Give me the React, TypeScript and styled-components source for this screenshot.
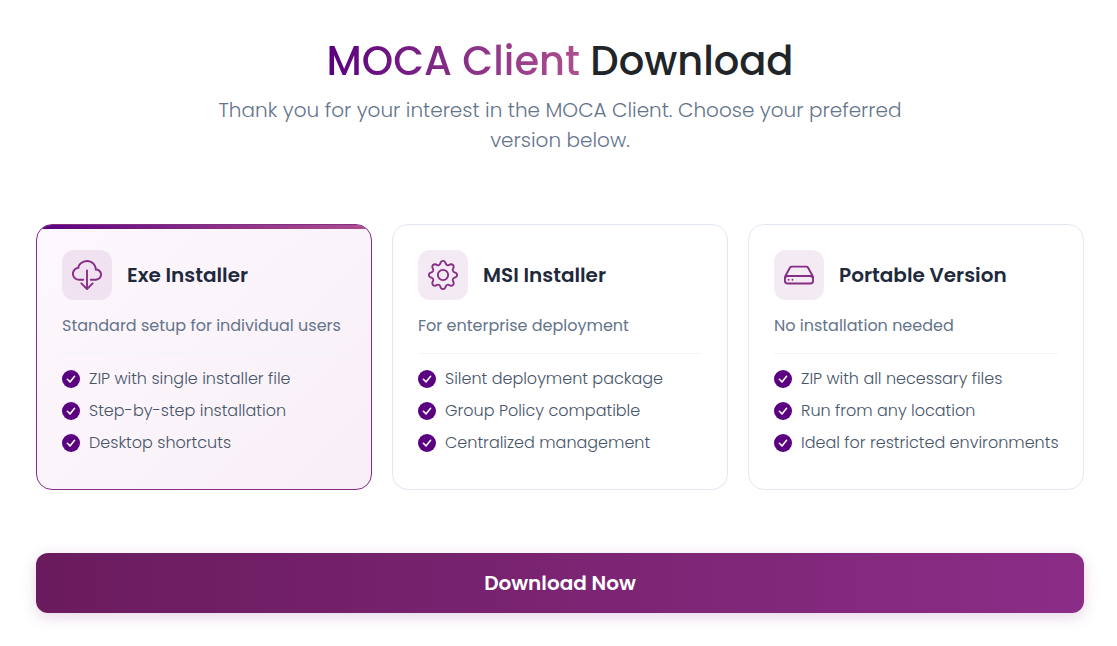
import React from 'react';
import styled, { createGlobalStyle, css } from 'styled-components';
import { BsCloudDownload, BsGear, BsHdd } from 'react-icons/bs';

const GlobalStyle = createGlobalStyle`
  *, *::before, *::after { box-sizing: border-box; }
  body {
    margin: 0;
    background: #fff;
    color: #212529;
    font-family: Poppins, Inter, sans-serif;
    font-size: 16px;
    line-height: 24px;
  }
`;

const Page = styled.main`
  display: flex;
  flex-direction: column;
  padding: 37px 33px 33px 36px;
`;

const Header = styled.header`
  display: flex;
  flex-direction: column;
  align-items: center;
  gap: 10px;
  text-align: center;
  margin-bottom: 69px;
`;

const Title = styled.h1`
  margin: 0;
  font-size: 40px;
  font-weight: 500;
  line-height: 48px;
`;

const Brand = styled.span`
  background: linear-gradient(90deg, #5a0080, #862d86 50%, #ae4f8f);
  background-clip: text;
  -webkit-background-clip: text;
  color: transparent;
`;

const Lead = styled.p`
  margin: 0;
  max-width: 700px;
  color: #64748b;
  font-size: 20px;
  font-weight: 300;
  line-height: 30px;
`;

const Cards = styled.section`
  display: grid;
  grid-template-columns: repeat(3, minmax(0, 1fr));
  gap: 20px;
  margin-bottom: 63px;
`;

const Card = styled.article<{ $selected?: boolean }>`
  position: relative;
  overflow: hidden;
  padding: 25px 25px 34px;
  border: 1px solid #e2e8f0;
  border-radius: 16px;
  background: #fff;
  ${({ $selected }) =>
    $selected &&
    css`
      border-color: #862d86;
      background: linear-gradient(135deg, #fdf8fe, #f8eff6);
      &::before {
        content: '';
        position: absolute;
        inset: 0 0 auto;
        height: 4px;
        background: linear-gradient(90deg, #5a0080, #862d86 50%, #ae4f8f);
      }
    `}
`;

const CardHead = styled.div`
  display: flex;
  align-items: center;
  gap: 15px;
  margin-bottom: 14px;
`;

const IconTile = styled.span`
  display: flex;
  align-items: center;
  justify-content: center;
  flex: none;
  width: 50px;
  height: 50px;
  border-radius: 12px;
  background: rgba(134, 45, 134, 0.1);
  color: #862d86;
  font-size: 30px;
`;

const CardTitle = styled.h2`
  margin: 0;
  color: #1e293b;
  font-size: 20px;
  font-weight: 600;
  line-height: 24px;
`;

const Description = styled.p`
  margin: 0 0 15px;
  color: #64748b;
  white-space: nowrap;
`;

const Features = styled.ul`
  display: flex;
  flex-direction: column;
  gap: 8px;
  margin: 0;
  padding: 13px 0 0;
  border-top: 1px solid #f1f5f9;
  list-style: none;
`;

const Feature = styled.li`
  display: flex;
  align-items: center;
  gap: 9px;
  color: #475569;
  font-weight: 300;
  white-space: nowrap;
`;

const CheckMark = styled.svg`
  flex: none;
  width: 18px;
  height: 18px;
`;

const DownloadButton = styled.button`
  width: 100%;
  height: 60px;
  border: 0;
  border-radius: 12px;
  background: linear-gradient(90deg, #6a1b5d, #8b2d87);
  box-shadow: 0 4px 15px rgba(134, 45, 134, 0.2);
  color: #fff;
  font: inherit;
  font-size: 20px;
  font-weight: 600;
  cursor: pointer;
`;

const versions = [
  {
    title: 'Exe Installer',
    description: 'Standard setup for individual users',
    Icon: BsCloudDownload,
    features: ['ZIP with single installer file', 'Step-by-step installation', 'Desktop shortcuts'],
  },
  {
    title: 'MSI Installer',
    description: 'For enterprise deployment',
    Icon: BsGear,
    features: ['Silent deployment package', 'Group Policy compatible', 'Centralized management'],
  },
  {
    title: 'Portable Version',
    description: 'No installation needed',
    Icon: BsHdd,
    features: ['ZIP with all necessary files', 'Run from any location', 'Ideal for restricted environments'],
  },
];

export default function App() {
  return (
    <>
      <GlobalStyle />
      <Page>
        <Header>
          <Title>
            <Brand>MOCA Client</Brand> Download
          </Title>
          <Lead>Thank you for your interest in the MOCA Client. Choose your preferred version below.</Lead>
        </Header>
        <Cards>
          {versions.map(({ title, description, Icon, features }, index) => (
            <Card key={title} $selected={index === 0}>
              <CardHead>
                <IconTile>
                  <Icon aria-hidden />
                </IconTile>
                <CardTitle>{title}</CardTitle>
              </CardHead>
              <Description>{description}</Description>
              <Features>
                {features.map((feature) => (
                  <Feature key={feature}>
                    <CheckMark viewBox="0 0 18 18" aria-hidden>
                      <circle cx="9" cy="9" r="9" fill="#5a0080" />
                      <path
                        d="M5.4 9.3 8 11.9 12.6 6.3"
                        fill="none"
                        stroke="#fff"
                        strokeWidth="1.6"
                        strokeLinecap="round"
                        strokeLinejoin="round"
                      />
                    </CheckMark>
                    {feature}
                  </Feature>
                ))}
              </Features>
            </Card>
          ))}
        </Cards>
        <DownloadButton type="button">Download Now</DownloadButton>
      </Page>
    </>
  );
}
